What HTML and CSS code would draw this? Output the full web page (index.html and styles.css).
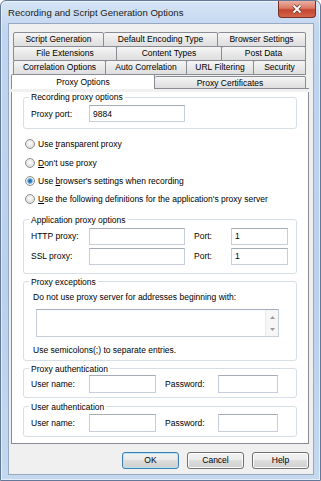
FILE: index.html
```html
<!DOCTYPE html>
<html lang="en">
<head>
  <meta charset="UTF-8">
  <meta name="viewport" content="width=device-width, initial-scale=1.0">
  <title>Recording and Script Generation Options</title>
  <link rel="stylesheet" href="styles.css">
</head>
<body>
  <div class="window">
    <div class="titlebar">
      <span class="title">Recording and Script Generation Options</span>
      <span class="close">
        <svg width="14" height="10" viewBox="0 0 14 10">
          <path d="M3.5 1.5 L10.5 8.5 M10.5 1.5 L3.5 8.5" stroke="#6b3a33" stroke-width="3.4"/>
          <path d="M3.5 1.5 L10.5 8.5 M10.5 1.5 L3.5 8.5" stroke="#ffffff" stroke-width="1.8"/>
        </svg>
      </span>
    </div>

    <div class="client">
      <div class="tabs">
        <div class="tab-row row-1">
          <div class="tab">Script Generation</div>
          <div class="tab">Default Encoding Type</div>
          <div class="tab">Browser Settings</div>
        </div>
        <div class="tab-row row-2">
          <div class="tab">File Extensions</div>
          <div class="tab">Content Types</div>
          <div class="tab">Post Data</div>
        </div>
        <div class="tab-row row-3">
          <div class="tab">Correlation Options</div>
          <div class="tab">Auto Correlation</div>
          <div class="tab">URL Filtering</div>
          <div class="tab">Security</div>
        </div>
        <div class="row-4">
          <div class="tab selected">Proxy Options</div>
          <div class="tab low">Proxy Certificates</div>
          <div class="filler"></div>
        </div>
      </div>

      <div class="panel">
        <fieldset class="group recording">
          <legend>Recording proxy options</legend>
          <div class="field-row">
            <span class="label">Proxy port:</span>
            <input class="input wide" type="text" value="9884">
          </div>
        </fieldset>

        <div class="radios">
          <label class="radio-row"><input class="radio" type="radio" name="proxy"><span>Use <u>t</u>ransparent proxy</span></label>
          <label class="radio-row"><input class="radio" type="radio" name="proxy"><span><u>D</u>on't use proxy</span></label>
          <label class="radio-row"><input class="radio" type="radio" name="proxy" checked><span>Use <u>b</u>rowser's settings when recording</span></label>
          <label class="radio-row"><input class="radio" type="radio" name="proxy"><span><u>U</u>se the following definitions for the application's proxy server</span></label>
        </div>

        <fieldset class="group app">
          <legend>Application proxy options</legend>
          <div class="field-row">
            <span class="label">HTTP proxy:</span>
            <input class="input wide" type="text" value="">
            <span class="port-label">Port:</span>
            <input class="input port" type="text" value="1">
          </div>
          <div class="field-row">
            <span class="label">SSL proxy:</span>
            <input class="input wide" type="text" value="">
            <span class="port-label">Port:</span>
            <input class="input port" type="text" value="1">
          </div>
        </fieldset>

        <fieldset class="group exceptions">
          <legend>Proxy exceptions</legend>
          <p class="note">Do not use proxy server for addresses beginning with:</p>
          <div class="textarea">
            <div class="scroll">
              <svg width="5" height="3" viewBox="0 0 5 3"><path d="M0 3 L2.5 0 L5 3 Z" fill="#9a9a9a"/></svg>
              <svg width="5" height="3" viewBox="0 0 5 3"><path d="M0 0 L2.5 3 L5 0 Z" fill="#9a9a9a"/></svg>
            </div>
          </div>
          <p class="hint">Use semicolons(;) to separate entries.</p>
        </fieldset>

        <fieldset class="group proxy-auth">
          <legend>Proxy authentication</legend>
          <div class="field-row">
            <span class="label">User name:</span>
            <input class="input user" type="text" value="">
            <span class="pw-label">Password:</span>
            <input class="input pw" type="password" value="">
          </div>
        </fieldset>

        <fieldset class="group user-auth">
          <legend>User authentication</legend>
          <div class="field-row">
            <span class="label">User name:</span>
            <input class="input user" type="text" value="">
            <span class="pw-label">Password:</span>
            <input class="input pw" type="password" value="">
          </div>
        </fieldset>
      </div>

      <div class="buttons">
        <button class="default">OK</button>
        <button>Cancel</button>
        <button>Help</button>
      </div>
    </div>
  </div>
</body>
</html>
```

FILE: styles.css
```css
* {
  box-sizing: border-box;
}
body {
  margin: 0;
  font-family: "Liberation Sans", Arial, sans-serif;
  font-size: 8.5px;
  color: #000;
  background: #fff;
}
.window {
  width: 321px;
  height: 481px;
  border: 1px solid #64799a;
  border-radius: 6px 6px 0 0;
  background: linear-gradient(#d6e5f6, #c0d5ef 30px, #bad1ec 60%, #c4d8f0);
  box-shadow: inset 0 0 0 1px rgba(255, 255, 255, 0.55);
  padding: 0 6px 5px 7px;
  display: flex;
  flex-direction: column;
}
.titlebar {
  height: 22px;
  flex-shrink: 0;
  display: flex;
  align-items: center;
}
.title {
  flex: 1;
  font-size: 9.6px;
  color: #1b1b1b;
}
.close {
  align-self: flex-start;
  width: 38px;
  height: 17px;
  margin-right: -2px;
  border: 1px solid #7a3026;
  border-top: none;
  border-radius: 0 0 4px 4px;
  background: linear-gradient(#eab0a2, #dc7a64 45%, #c44530 55%, #d2654a);
  display: flex;
  align-items: center;
  justify-content: center;
}
.client {
  background: #f0f0f0;
  border: 1px solid #97a9c2;
  padding: 8px 4px 5px 2px;
}

/* tabs */
.tab-row {
  display: grid;
  margin: 0 3px 0 2px;
}
.tab-row + .tab-row {
  margin-top: -1px;
}
.row-1 {
  grid-template-columns: 91px 114px 88px;
}
.row-2 {
  grid-template-columns: 104px 105px 84px;
}
.row-3 {
  grid-template-columns: 93px 81px 67px 52px;
}
.row-4 {
  display: grid;
  grid-template-columns: 144px 151px 1fr;
  align-items: end;
  margin-top: -1px;
}
.tab {
  height: 15px;
  line-height: 13px;
  text-align: center;
  white-space: nowrap;
  border: 1px solid #898c95;
  border-radius: 2px 2px 0 0;
  background: linear-gradient(#f6f6f6, #e9e9e9 50%, #dedede);
}
.tab + .tab {
  border-left: none;
}
.tab.selected {
  background: #fff;
  border-bottom: none;
  line-height: 14px;
}
.tab.low {
  height: 13px;
  line-height: 12px;
}
.filler {
  height: 1px;
  border-bottom: 1px solid #898c95;
}
.panel {
  background: #fff;
  border: 1px solid #898c95;
  border-top: none;
  padding: 0 11px 6px;
}

/* group boxes */
.group {
  margin: 0;
  min-width: 0;
  padding: 0 7px;
  border: 1px solid #d5dfe5;
  border-radius: 3px;
}
.group legend {
  padding: 0 2px;
  margin-left: -2px;
  line-height: 10px;
}
.field-row {
  display: flex;
  align-items: center;
}
.label {
  width: 58px;
  flex-shrink: 0;
}
.input {
  height: 17px;
  font: inherit;
  padding: 0 3px;
  background: #fff;
  border: 1px solid #c5ced9;
  border-top-color: #a4acb7;
  outline: none;
}
.wide {
  width: 96px;
}
.port-label {
  width: 37px;
  margin-left: 9px;
}
.port {
  width: 57px;
}
.user {
  width: 67px;
  height: 18px;
}
.pw-label {
  width: 53px;
  margin-left: 9px;
}
.pw {
  width: 60px;
  height: 18px;
}

.recording {
  margin-top: 3px;
  padding-bottom: 6px;
}
.recording .field-row {
  margin-top: 3px;
}

/* radios */
.radios {
  margin: 6px 0 0 2px;
}
.radio-row {
  height: 18.4px;
  display: flex;
  align-items: center;
  white-space: nowrap;
}
.radio {
  appearance: none;
  flex-shrink: 0;
  width: 10px;
  height: 10px;
  margin: 0 3px 0 0;
  border: 1px solid #8e8f8f;
  border-radius: 50%;
  background: radial-gradient(circle at 50% 40%, #fdfdfd, #e2e2e2 65%, #cfcfcf);
}
.radio:checked {
  background: radial-gradient(circle, #1d5f9c 0, #3f8acb 1.8px, #8cc0e8 2.6px, #eef3f8 3.2px, #d4d4d4 100%);
}

.app {
  margin-top: 6px;
  padding-bottom: 8px;
}
.app .field-row {
  margin-top: 3px;
}

.exceptions {
  margin-top: 3px;
  padding-bottom: 5px;
}
.note,
.hint {
  margin: 0 0 0 2px;
  line-height: 10px;
}
.note {
  margin-top: 5px;
}
.hint {
  margin-top: 8px;
}
.textarea {
  margin: 7px 0 0 5px;
  width: 243px;
  height: 28px;
  background: #fff;
  border: 1px solid #c5ced9;
  border-top-color: #a4acb7;
  display: flex;
  justify-content: flex-end;
}
.scroll {
  width: 13px;
  background: #f6f6f6;
  border-left: 1px solid #ececec;
  display: flex;
  flex-direction: column;
  align-items: center;
  justify-content: space-between;
  padding: 6px 0 5px;
}

.proxy-auth {
  margin-top: 3px;
  padding-bottom: 4px;
}
.proxy-auth .field-row {
  margin-top: 1px;
}
.user-auth {
  margin-top: 4px;
  padding-bottom: 4px;
}
.user-auth .field-row {
  margin-top: 2px;
}

/* dialog buttons */
.buttons {
  display: flex;
  justify-content: flex-end;
  gap: 8px;
  margin-top: 8px;
}
.buttons button {
  width: 57px;
  height: 17px;
  padding: 0;
  font: inherit;
  color: #000;
  border: 1px solid #707070;
  border-radius: 3px;
  background: linear-gradient(#f2f2f2, #ebebeb 50%, #dddddd 50%, #cfcfcf);
  box-shadow: inset 0 0 0 1px #fbfbfb;
}
.buttons .default {
  border-color: #3c7fb1;
  box-shadow: inset 0 0 0 1px #b9e4f5;
}
```
